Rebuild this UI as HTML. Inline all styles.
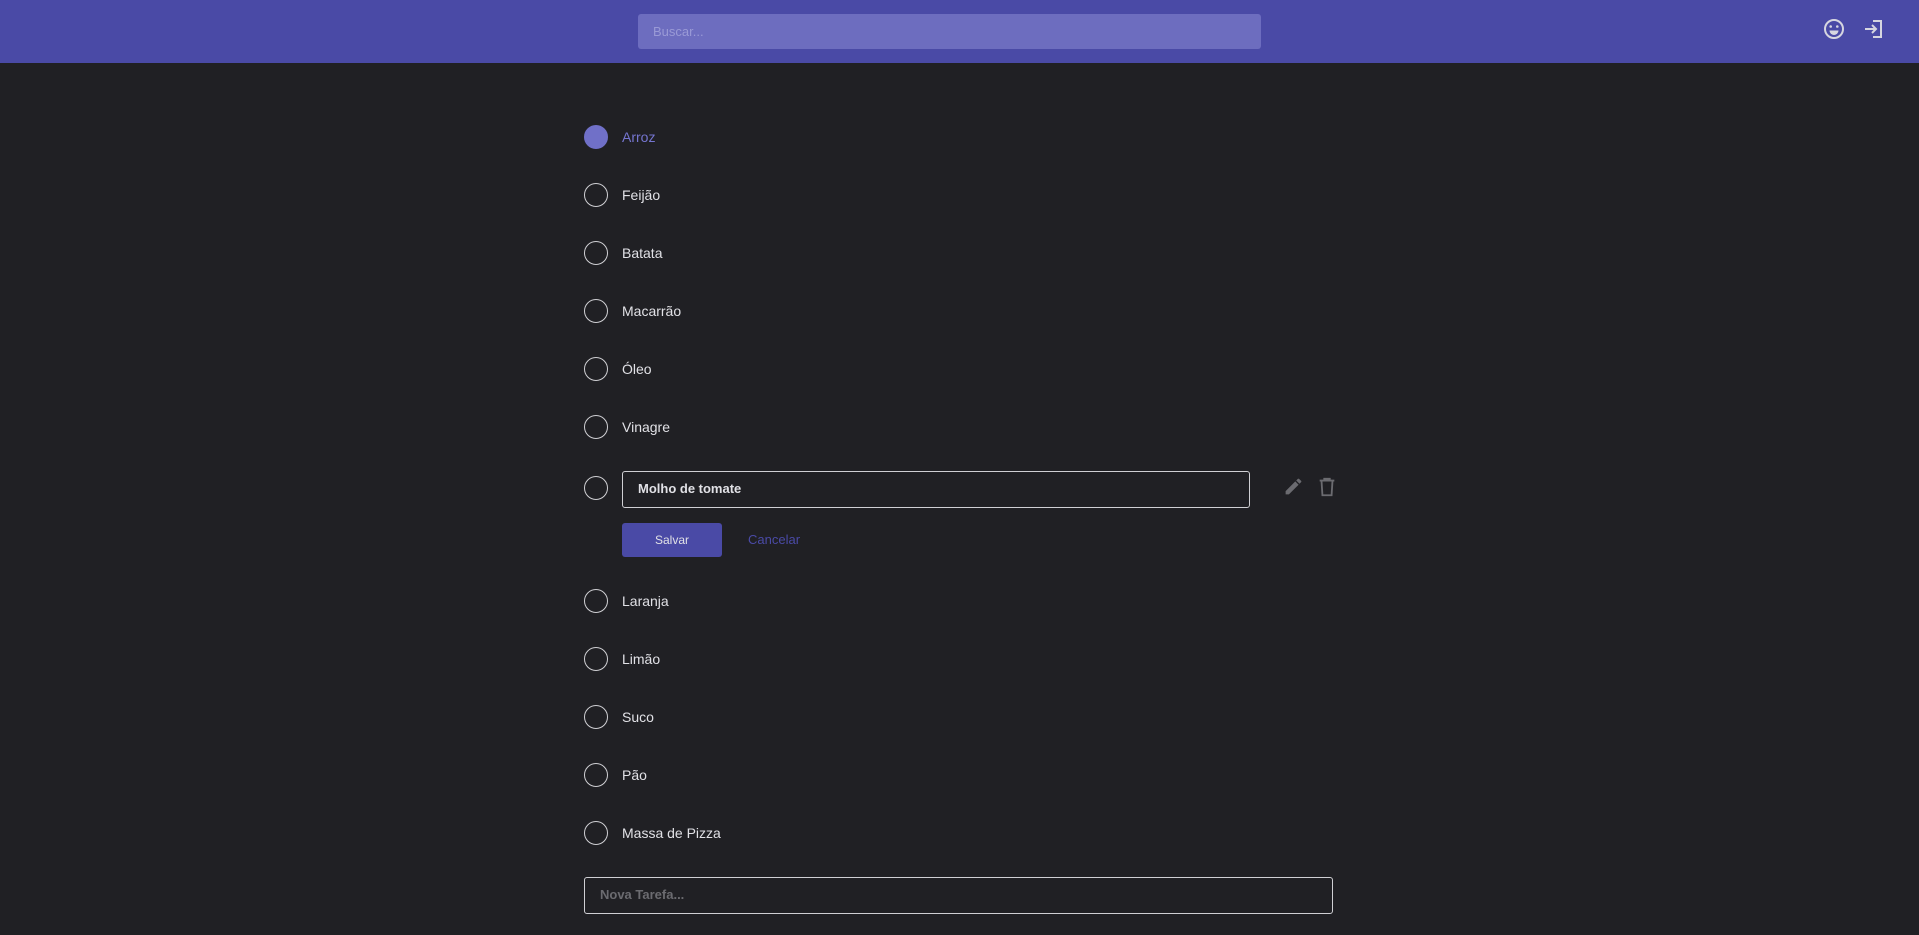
<!DOCTYPE html><html><head><meta charset="utf-8"><style>
*{box-sizing:border-box;margin:0;padding:0}
body{width:1919px;height:935px;background:#202024;font-family:"Liberation Sans",sans-serif;position:relative;overflow:hidden;color:#e1e1e6}
.hdr{position:absolute;left:0;top:0;width:1919px;height:63px;background:#4a4aa6}
.search{position:absolute;left:638px;top:14px;width:623px;height:35px;background:#6d6dbf;border-radius:3px;color:#9a9ad6;font-size:13px;line-height:35px;padding-left:15px}
.row{position:absolute;left:584px;height:24px;font-size:14px;line-height:24px}
.c{position:absolute;left:0;top:0;width:24px;height:24px;border:1.5px solid #d0d0d4;border-radius:50%}
.t{position:absolute;left:38px;top:0;white-space:nowrap}
.box{position:absolute;border:1.5px solid #d0d0d4;border-radius:3px;font-size:13px;padding-left:15px}
</style></head><body>
<div class="hdr"></div>
<div class="search">Buscar...</div>
<svg style="position:absolute;left:1822px;top:17px" width="24" height="24" viewBox="0 0 24 24"><circle cx="12" cy="12" r="9" fill="none" stroke="#d6d6e0" stroke-width="2"/><circle cx="8.7" cy="9.5" r="1.3" fill="#d6d6e0"/><circle cx="15.3" cy="9.5" r="1.3" fill="#d6d6e0"/><path d="M7.5 13.5h9a4.5 4.5 0 0 1-9 0z" fill="#d6d6e0"/></svg>
<svg style="position:absolute;left:1862px;top:17px" width="24" height="24" viewBox="0 0 24 24"><path d="M11 4h8v16h-8" fill="none" stroke="#d6d6e0" stroke-width="2"/><path d="M3 12h10M10 8l4 4-4 4" fill="none" stroke="#d6d6e0" stroke-width="2"/></svg>
<div class="row" style="top:125px"><div class="c" style="background:#7070c8;border-color:#7070c8"></div><div class="t" style="color:#7575d0">Arroz</div></div>
<div class="row" style="top:183px"><div class="c"></div><div class="t">Feijão</div></div>
<div class="row" style="top:241px"><div class="c"></div><div class="t">Batata</div></div>
<div class="row" style="top:299px"><div class="c"></div><div class="t">Macarrão</div></div>
<div class="row" style="top:357px"><div class="c"></div><div class="t">Óleo</div></div>
<div class="row" style="top:415px"><div class="c"></div><div class="t">Vinagre</div></div>
<div class="row" style="top:476px"><div class="c"></div></div>
<div class="box" style="left:622px;top:471px;width:628px;height:37px;line-height:34px;font-weight:bold;color:#e1e1e6">Molho de tomate</div>
<svg style="position:absolute;left:1283px;top:476px" width="21" height="21" viewBox="0 0 24 24"><path d="M3 17.25V21h3.75L17.8 9.94l-3.75-3.75L3 17.25zM20.7 7.04a1 1 0 0 0 0-1.41l-2.34-2.34a1 1 0 0 0-1.41 0l-1.83 1.83 3.75 3.75 1.83-1.83z" fill="#6b6b70"/></svg>
<svg style="position:absolute;left:1316px;top:476px" width="22" height="22" viewBox="0 0 24 24"><path d="M4 5h16M9 5V3h6v2M6 5l1 16h10l1-16" fill="none" stroke="#6b6b70" stroke-width="2"/></svg>
<div style="position:absolute;left:622px;top:523px;width:100px;height:34px;background:#4a4aa6;border-radius:3px;color:#e1e1e6;font-size:12px;line-height:34px;text-align:center">Salvar</div>
<div style="position:absolute;left:748px;top:523px;height:34px;line-height:34px;font-size:13px;color:#4a4aa6">Cancelar</div>
<div class="row" style="top:589px"><div class="c"></div><div class="t">Laranja</div></div>
<div class="row" style="top:647px"><div class="c"></div><div class="t">Limão</div></div>
<div class="row" style="top:705px"><div class="c"></div><div class="t">Suco</div></div>
<div class="row" style="top:763px"><div class="c"></div><div class="t">Pão</div></div>
<div class="row" style="top:821px"><div class="c"></div><div class="t">Massa de Pizza</div></div>
<div class="box" style="left:584px;top:877px;width:749px;height:37px;line-height:34px;color:#6b6b70;font-weight:bold">Nova Tarefa...</div>
</body></html>
